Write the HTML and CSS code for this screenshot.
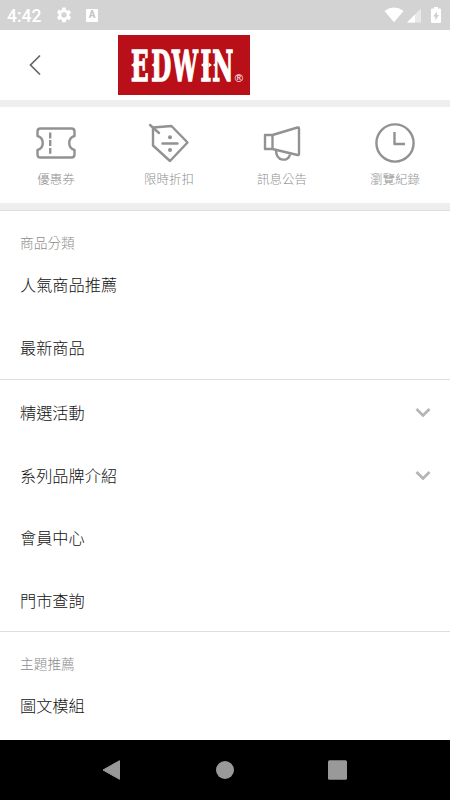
FILE: index.html
```html
<!DOCTYPE html>
<html lang="zh-Hant">
<head>
<meta charset="utf-8">
<title>EDWIN</title>
<link rel="stylesheet" href="styles.css">
</head>
<body>
<div class="screen">
  <div class="status">
    <span class="time">4:42</span>
    <svg class="gear" width="18" height="18" viewBox="0 0 24 24"><path fill="#fff" d="M19.14 12.94c.04-.3.06-.61.06-.94s-.02-.64-.07-.94l2.03-1.58a.49.49 0 0 0 .12-.61l-1.92-3.32a.49.49 0 0 0-.59-.22l-2.39.96a7 7 0 0 0-1.62-.94l-.36-2.54A.48.48 0 0 0 13.92 2h-3.84a.47.47 0 0 0-.47.41l-.36 2.54c-.59.24-1.13.57-1.62.94l-2.39-.96a.47.47 0 0 0-.59.22L2.74 8.87a.48.48 0 0 0 .12.61l2.03 1.58a6 6 0 0 0-.02 1.88l-2.03 1.58a.49.49 0 0 0-.12.61l1.92 3.32c.12.22.37.29.59.22l2.39-.96c.5.38 1.03.7 1.62.94l.36 2.54c.05.24.24.41.48.41h3.84c.24 0 .44-.17.47-.41l.36-2.54a7 7 0 0 0 1.62-.94l2.39.96c.22.08.47 0 .59-.22l1.92-3.32a.47.47 0 0 0-.12-.61zM12 15.6A3.6 3.6 0 1 1 12 8.4a3.6 3.6 0 0 1 0 7.2z"/></svg>
    <span class="app-badge">A</span>
    <svg class="signals" width="58" height="18" viewBox="0 0 58 18">
      <path fill="#fff" d="M.5 5Q10 -1.8 19.5 5L10 16.2z"/>
      <path fill="#e9e9e9" d="M23 16.500L37 2.500V16.500z"/>
      <path fill="#fff" d="M23 16.500L31 8.500V16.500z"/>
      <path fill="#fff" d="M50 1h4v1.500h2q1 0 1 1V16q0 1-1 1h-8q-1 0-1-1V3.500q0-1 1-1h2z"/>
      <path fill="#cfcfcf" d="M53 5.500l-4 5h2.300v4l3.700-5.500h-2z"/>
    </svg>
  </div>
  <header class="header">
    <svg class="back" width="12" height="22" viewBox="0 0 12 22"><path d="M11 1.500L1.500 11L11 20.500" fill="none" stroke="#666" stroke-width="1.700"/></svg>
    <svg class="logo" width="132" height="60" viewBox="0 0 132 60">
      <rect width="132" height="60" fill="#b90f18"/>
      <text class="wordmark" transform="scale(.53 1)" x="24.500 62.800 101.800 155.700 177.800" y="46">EDWIN</text>
      <path fill="#fff" d="M13 30l4-3v6zM33.500 30l4-3v6zM83 30l3-2.500v5zM94 30l-3.500-2.500v5zM95 30l4-3v6z"/>
      <text class="reg" x="116.800" y="47" textLength="8.300" lengthAdjust="spacingAndGlyphs">®</text>
    </svg>
  </header>
  <nav class="quick">
    <a class="tool"><svg width="42" height="42" viewBox="0 0 42 42"><path d="M5.500 6.500h31q3 0 3 3V14c-7 2-7 12 0 14v4.500q0 3-3 3h-31q-3 0-3-3V28c7-2 7-12 0-14V9.500q0-3 3-3z"/><path d="M15.200 10.500v6M15.200 18v6M15.200 26v5.800"/></svg><span>優惠券</span></a>
    <a class="tool"><svg width="42" height="42" viewBox="0 0 42 42"><path d="M5 5.500L23.500 4L39.500 20.500L22 39L5 23.500z"/><path d="M2 3L11 11M14.500 21.500h15" stroke-linecap="round"/><g class="dots"><circle cx="22" cy="15.200" r="2"/><circle cx="22" cy="28" r="2"/></g></svg><span>限時折扣</span></a>
    <a class="tool"><svg width="42" height="42" viewBox="0 0 42 42"><path d="M4 13h7.500v14H4zM11.500 13L36.500 5.500q1.500-.3 1.500 1V32q0 1.500-1.500 1L11.500 27z"/><path d="M15 28c0 12 12.500 12 14 4.500"/></svg><span>訊息公告</span></a>
    <a class="tool"><svg width="42" height="42" viewBox="0 0 42 42"><circle cx="21" cy="21" r="18.600"/><path d="M20.500 10v12H31"/></svg><span>瀏覽紀錄</span></a>
  </nav>
  <main class="menu">
    <section class="group">
      <h2>商品分類</h2>
      <a class="row">人氣商品推薦</a>
      <a class="row">最新商品</a>
    </section>
    <section class="group plain">
      <a class="row">精選活動<svg class="chev" width="16" height="10" viewBox="0 0 16 10"><path d="M1.500 2L8 8.500L14.500 2"/></svg></a>
      <a class="row">系列品牌介紹<svg class="chev" width="16" height="10" viewBox="0 0 16 10"><path d="M1.500 2L8 8.500L14.500 2"/></svg></a>
      <a class="row">會員中心</a>
      <a class="row">門市查詢</a>
    </section>
    <section class="group">
      <h2>主題推薦</h2>
      <a class="row">圖文模組</a>
    </section>
  </main>
  <footer class="navbar">
    <svg width="20" height="20" viewBox="0 0 20 20"><path d="M17.500 .7L1 10L17.500 19.300z" stroke="#999" stroke-linejoin="round"/></svg>
    <svg width="20" height="20" viewBox="0 0 20 20"><circle cx="10" cy="10" r="9"/></svg>
    <svg width="20" height="20" viewBox="0 0 20 20"><rect x="0" y=".3" width="19" height="19.400" rx="1.500"/></svg>
  </footer>
</div>
</body>
</html>
```
FILE: styles.css
```css
* { box-sizing: border-box; }
body {
  margin: 0;
  background: #fff;
  font-family: "Noto Sans CJK TC", sans-serif;
  font-weight: 300;
}
svg { display: block; flex: none; }
.screen { width: 450px; height: 800px; display: flex; flex-direction: column; overflow: hidden; }
.status { height: 30px; flex: none; background: #d3d3d3; display: flex; align-items: center; padding: 0 8px 0 7px; }
.time { font: 500 17.500px/30px Roboto, sans-serif; color: #fff; width: 48px; padding-top: 1px; }
.gear { margin-right: 13px; }
.app-badge {
  width: 12px; height: 13px; background: #fff; border-radius: 1px; color: #c4c4c4;
  font: 700 10px/12px Roboto, sans-serif; text-align: center;
}
.signals { margin-left: auto; }
.header { height: 70px; flex: none; display: flex; align-items: center; padding-left: 29px; }
.logo { margin-left: 77px; }
.wordmark { font: 700 43.500px "DejaVu Serif", serif; fill: #fff; stroke: #fff; stroke-width: 1.500; }
.reg { font: 400 11px "Liberation Sans", sans-serif; fill: #fff; }
.quick {
  height: 111px; flex: none; display: flex; justify-content: space-between; padding: 15px 13px 0 14px;
  border-top: 7px solid #eee; border-bottom: 8px solid #eee;
}
.tool { width: 84px; display: flex; flex-direction: column; align-items: center; color: #8f8f8f; font-size: 12.500px; line-height: 18px; gap: 6px; }
.tool svg { fill: none; stroke: #929292; stroke-width: 2.400; stroke-linejoin: round; }
.tool .dots { fill: #929292; stroke: none; }
.menu { flex: 1; border-top: 1px solid #ddd; margin-top: -1px; overflow: hidden; }
.group { padding-top: 20px; border-bottom: 1px solid #ddd; }
.group:first-child { padding-bottom: 1px; }
.group.plain { padding-top: 1px; }
.group:last-child { border-bottom: 0; }
h2 { margin: 0; font-size: 13.700px; font-weight: 300; line-height: 22px; color: #8c8c8c; padding-left: 20px; }
.row { height: 62.500px; display: flex; align-items: center; justify-content: space-between; padding: 0 19px 0 20px; font-size: 16.200px; color: #111; }
.chev { fill: none; stroke: #b5b5b5; stroke-width: 2.700; }
.navbar { height: 60px; flex: none; background: #000; display: flex; justify-content: space-between; align-items: center; padding: 0 102px; }
.navbar svg { fill: #999; }
```
